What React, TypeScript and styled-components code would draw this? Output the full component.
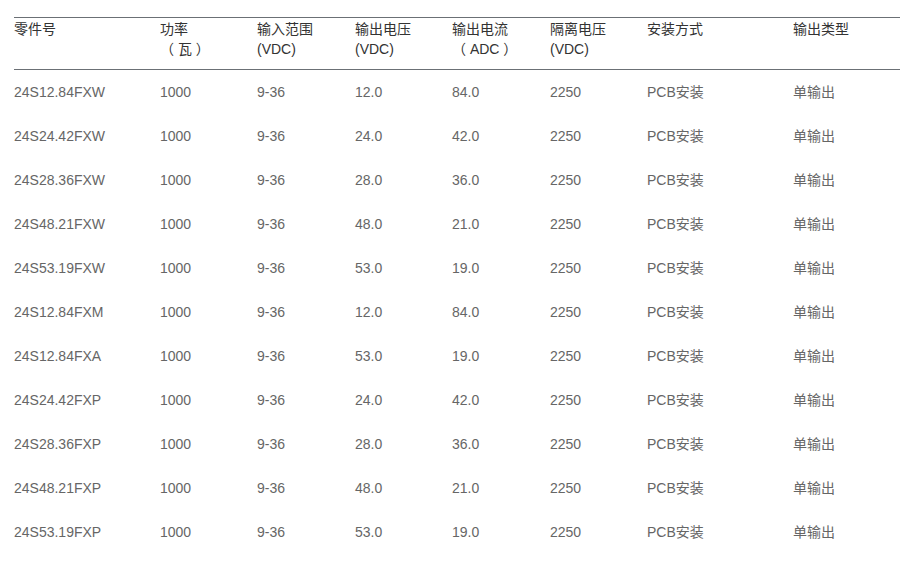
import React from "react";
import styled, { createGlobalStyle } from "styled-components";

const Global = createGlobalStyle`
  body { margin: 0; background: #fff; font-family: "Liberation Sans", Arial, "Noto Sans CJK SC", sans-serif; }
`;

const Wrap = styled.div`
  padding: 17px 0 0 14px;
`;

const Table = styled.table`
  border-collapse: collapse;
  width: 886px;
  table-layout: fixed;
  font-size: 14px;
`;

const Th = styled.th`
  text-align: left;
  font-weight: normal;
  color: #333;
  line-height: 20px;
  padding: 1px 0 10px 0;
  vertical-align: top;
  border-top: 1px solid #6b7075;
  border-bottom: 1px solid #6b7075;
`;

const Td = styled.td`
  color: #666;
  line-height: 20px;
  padding: 12px 0;
  vertical-align: middle;
`;

const widths = [146, 97, 98, 97, 98, 97, 146, 107];
const headers: React.ReactNode[] = [
  "零件号",
  <>功率<br />（ 瓦 ）</>,
  <>输入范围<br />(VDC)</>,
  <>输出电压<br />(VDC)</>,
  <>输出电流<br />（ ADC ）</>,
  <>隔离电压<br />(VDC)</>,
  "安装方式",
  "输出类型",
];

const rows: [string, string, string][] = [
  ["24S12.84FXW", "12.0", "84.0"],
  ["24S24.42FXW", "24.0", "42.0"],
  ["24S28.36FXW", "28.0", "36.0"],
  ["24S48.21FXW", "48.0", "21.0"],
  ["24S53.19FXW", "53.0", "19.0"],
  ["24S12.84FXM", "12.0", "84.0"],
  ["24S12.84FXA", "53.0", "19.0"],
  ["24S24.42FXP", "24.0", "42.0"],
  ["24S28.36FXP", "28.0", "36.0"],
  ["24S48.21FXP", "48.0", "21.0"],
  ["24S53.19FXP", "53.0", "19.0"],
];

export default function App() {
  return (
    <Wrap>
      <Global />
      <Table>
        <colgroup>
          {widths.map((w, i) => <col key={i} style={{ width: w }} />)}
        </colgroup>
        <thead>
          <tr>{headers.map((h, i) => <Th key={i}>{h}</Th>)}</tr>
        </thead>
        <tbody>
          {rows.map(([p, v, a]) => (
            <tr key={p}>
              <Td>{p}</Td>
              <Td>1000</Td>
              <Td>9-36</Td>
              <Td>{v}</Td>
              <Td>{a}</Td>
              <Td>2250</Td>
              <Td>PCB安装</Td>
              <Td>单输出</Td>
            </tr>
          ))}
        </tbody>
      </Table>
    </Wrap>
  );
}
